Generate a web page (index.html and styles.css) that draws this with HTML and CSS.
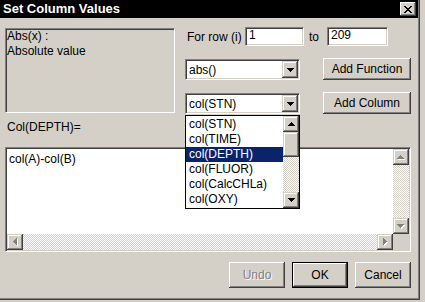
FILE: index.html
```html
<!DOCTYPE html>
<html lang="en">
<head>
    <meta charset="UTF-8">
    <meta name="viewport" content="width=device-width, initial-scale=1.0">
    <title>Set Column Values</title>
<link rel="stylesheet" href="styles.css">
</head>
<body>
    <div class="window">
        <div class="titlebar">
            <span class="title">Set Column Values</span>
            <span class="close-btn">
                <svg width="8" height="7" viewBox="0 0 8 7" shape-rendering="crispEdges"><path d="M0 0h2v1H0zM6 0h2v1H6zM1 1h2v1H1zM5 1h2v1H5zM2 2h4v1H2zM3 3h2v1H3zM2 4h4v1H2zM1 5h2v1H1zM5 5h2v1H5zM0 6h2v1H0zM6 6h2v1H6z"/></svg>
            </span>
        </div>

        <div class="dialog">
            <div class="top">
                <div class="desc">Abs(x) :<br>Absolute value</div>

                <div class="controls">
                    <div class="range-row">
                        <span class="lbl-row">For row (i)</span>
                        <div class="edit edit-from">1</div>
                        <span class="lbl-to">to</span>
                        <div class="edit edit-to">209</div>
                    </div>

                    <div class="ctrl-row">
                        <div class="combo">
                            <span class="combo-text">abs()</span>
                            <span class="sb-btn drop-btn">
                                <svg width="7" height="4" shape-rendering="crispEdges"><path d="M0 0h7v1h-1v1h-1v1h-1v1h-1v-1h-1v-1h-1v-1h-1z"/></svg>
                            </span>
                        </div>
                        <button class="btn btn-wide">Add Function</button>
                    </div>

                    <div class="ctrl-row">
                        <div class="combo">
                            <span class="combo-text">col(STN)</span>
                            <span class="sb-btn drop-btn">
                                <svg width="7" height="4" shape-rendering="crispEdges"><path d="M0 0h7v1h-1v1h-1v1h-1v1h-1v-1h-1v-1h-1v-1h-1z"/></svg>
                            </span>
                        </div>
                        <button class="btn btn-wide">Add Column</button>

                        <!-- open dropdown of the column combo -->
                        <div class="droplist">
                            <ul class="items">
                                <li>col(STN)</li>
                                <li>col(TIME)</li>
                                <li class="selected">col(DEPTH)</li>
                                <li>col(FLUOR)</li>
                                <li>col(CalcCHLa)</li>
                                <li>col(OXY)</li>
                            </ul>
                            <div class="vscroll">
                                <span class="sb-btn">
                                    <svg width="7" height="4" shape-rendering="crispEdges"><path d="M3 0h1v1h1v1h1v1h1v1h-7v-1h1v-1h1v-1h1z"/></svg>
                                </span>
                                <span class="sb-thumb"></span>
                                <span class="sb-track"></span>
                                <span class="sb-btn">
                                    <svg width="7" height="4" shape-rendering="crispEdges"><path d="M0 0h7v1h-1v1h-1v1h-1v1h-1v-1h-1v-1h-1v-1h-1z"/></svg>
                                </span>
                            </div>
                        </div>
                    </div>
                </div>
            </div>

            <div class="formula-lbl">Col(DEPTH)=</div>

            <div class="editor">
                <div class="editor-text">col(A)-col(B)</div>
                <div class="vscroll">
                    <span class="sb-btn">
                        <svg width="8" height="5" shape-rendering="crispEdges"><path fill="#fff" d="M4 1h1v1h1v1h1v1h1v1h-7v-1h1v-1h1v-1h1z"/><path fill="#808080" d="M3 0h1v1h1v1h1v1h1v1h-7v-1h1v-1h1v-1h1z"/></svg>
                    </span>
                    <span class="sb-track"></span>
                    <span class="sb-btn">
                        <svg width="8" height="5" shape-rendering="crispEdges"><path fill="#fff" d="M1 1h7v1h-1v1h-1v1h-1v1h-1v-1h-1v-1h-1v-1h-1z"/><path fill="#808080" d="M0 0h7v1h-1v1h-1v1h-1v1h-1v-1h-1v-1h-1v-1h-1z"/></svg>
                    </span>
                </div>
                <div class="hscroll">
                    <span class="sb-btn">
                        <svg width="5" height="8" shape-rendering="crispEdges"><path fill="#fff" d="M4 1h1v7h-1v-1h-1v-1h-1v-1h-1v-1h1v-1h1v-1h1z"/><path fill="#808080" d="M3 0h1v7h-1v-1h-1v-1h-1v-1h-1v-1h1v-1h1v-1h1z"/></svg>
                    </span>
                    <span class="sb-track"></span>
                    <span class="sb-btn">
                        <svg width="5" height="8" shape-rendering="crispEdges"><path fill="#fff" d="M1 1h1v1h1v1h1v1h1v1h-1v1h-1v1h-1v1h-1z"/><path fill="#808080" d="M0 0h1v1h1v1h1v1h1v1h-1v1h-1v1h-1v1h-1z"/></svg>
                    </span>
                </div>
                <div class="sb-corner"></div>
            </div>

            <div class="actions">
                <button class="btn btn-action" disabled>Undo</button>
                <button class="btn btn-action btn-default">OK</button>
                <button class="btn btn-action">Cancel</button>
            </div>
        </div>
    </div>
</body>
</html>
```

FILE: styles.css
```css
* {
    box-sizing: border-box;
}

body {
    margin: 0;
    width: 425px;
    height: 302px;
    overflow: hidden;
    background-color: #d4d0c8;
    font-family: "Liberation Sans", Arial, sans-serif;
    font-size: 12px;
    color: #000;
}

/* Window frame, only right and bottom edges are visible */
.window {
    width: 420px;
    height: 300px;
    background: #d4d0c8;
    box-shadow: inset -1px -1px #404040, inset -2px -2px #808080;
}

.titlebar {
    width: 418px;
    height: 18px;
    padding: 0 2px 0 3px;
    background: #000;
    color: #fff;
    display: flex;
    align-items: center;
    justify-content: space-between;
}

.title {
    font-size: 13px;
    font-weight: bold;
    line-height: 18px;
}

.close-btn {
    width: 16px;
    height: 14px;
    background: #d4d0c8;
    display: flex;
    align-items: center;
    justify-content: center;
    box-shadow: inset -1px -1px #404040, inset 1px 1px #fff, inset -2px -2px #808080;
}

.dialog {
    width: 416px;
    padding: 9px 5px 0 5px;
}

/* Description and the controls on its right */
.top {
    display: flex;
    height: 87px;
}

.desc {
    width: 170px;
    height: 85px;
    margin-top: 1px;
    padding-left: 1px;
    line-height: 15px;
    border: 1px solid;
    border-color: #808080 #fff #fff #808080;
    box-shadow: inset 1px 1px #404040, inset -1px -1px #d4d0c8;
}

.controls {
    flex: 1;
    margin-left: 10px;
}

.range-row {
    display: flex;
    align-items: center;
    height: 19px;
}

.lbl-row {
    width: 60px;
    padding-left: 2px;
}

.lbl-to {
    width: 23px;
    padding-left: 5px;
}

.edit {
    height: 19px;
    padding: 0 3px;
    line-height: 15px;
    background: #fff;
    border: 1px solid;
    border-color: #808080 #fff #fff #808080;
    box-shadow: inset 1px 1px #404040, inset -1px -1px #d4d0c8;
}

.edit-from {
    width: 59px;
}

.edit-to {
    width: 61px;
}

.ctrl-row {
    position: relative;
    display: flex;
    align-items: flex-end;
    justify-content: space-between;
    height: 22px;
    margin-top: 12px;
}

.combo {
    width: 115px;
    height: 21px;
    display: flex;
    align-items: center;
    background: #fff;
    border: 1px solid;
    border-color: #808080 #fff #fff #808080;
    box-shadow: inset 1px 1px #404040, inset -1px -1px #d4d0c8;
    padding: 1px;
}

.combo-text {
    flex: 1;
    padding-left: 2px;
}

/* Raised buttons of scroll bars and combo boxes */
.sb-btn {
    width: 16px;
    height: 16px;
    flex: none;
    display: flex;
    align-items: center;
    justify-content: center;
    background: #d4d0c8;
    box-shadow: inset -1px -1px #404040, inset 1px 1px #d4d0c8, inset -2px -2px #808080, inset 2px 2px #fff;
}

.drop-btn {
    height: 17px;
}

.sb-thumb {
    height: 25px;
    flex: none;
    background: #d4d0c8;
    box-shadow: inset -1px -1px #404040, inset 1px 1px #d4d0c8, inset -2px -2px #808080, inset 2px 2px #fff;
}

.sb-track {
    flex: 1;
    background: repeating-conic-gradient(#fff 0 25%, #d4d0c8 0 50%) 0 0 / 2px 2px;
}

.sb-corner {
    background: #d4d0c8;
}

/* Push buttons */
.btn {
    font-family: inherit;
    font-size: 12px;
    color: #000;
    background: #d4d0c8;
    border: none;
    padding: 0;
    box-shadow: inset -1px -1px #404040, inset 1px 1px #fff, inset -2px -2px #808080, inset 2px 2px #d4d0c8;
}

.btn-wide {
    width: 88px;
    height: 22px;
}

.btn:disabled {
    color: #808080;
    text-shadow: 1px 1px 0 #fff;
}

.btn-default {
    box-shadow: inset 0 0 0 1px #000, inset -2px -2px #404040, inset 2px 2px #fff, inset -3px -3px #808080;
}

/* Open list of the column combo */
.droplist {
    position: absolute;
    left: 0;
    top: 23px;
    z-index: 2;
    width: 115px;
    height: 94px;
    display: flex;
    background: #fff;
    border: 1px solid #000;
}

.items {
    flex: 1;
    list-style: none;
    margin: 0;
    padding: 1px 0;
}

.items li {
    height: 15px;
    line-height: 15px;
    padding-left: 3px;
}

.items li.selected {
    background: #0a246a;
    color: #fff;
}

.vscroll {
    display: flex;
    flex-direction: column;
}

.hscroll {
    display: flex;
}

.formula-lbl {
    margin-top: 6px;
    padding-left: 2px;
    line-height: 15px;
}

/* Formula editor with both scroll bars */
.editor {
    width: 406px;
    height: 105px;
    margin-top: 12px;
    display: grid;
    grid-template-columns: 1fr 16px;
    grid-template-rows: 1fr 16px;
    background: #fff;
    border: 1px solid;
    border-color: #808080 #fff #fff #808080;
    box-shadow: inset 1px 1px #404040, inset -1px -1px #d4d0c8;
    padding: 1px;
}

.editor-text {
    padding: 3px 0 0 2px;
    line-height: 15px;
}

.actions {
    display: flex;
    justify-content: flex-end;
    gap: 7px;
    width: 406px;
    margin-top: 10px;
}

.btn-action {
    width: 56px;
    height: 26px;
}
```
